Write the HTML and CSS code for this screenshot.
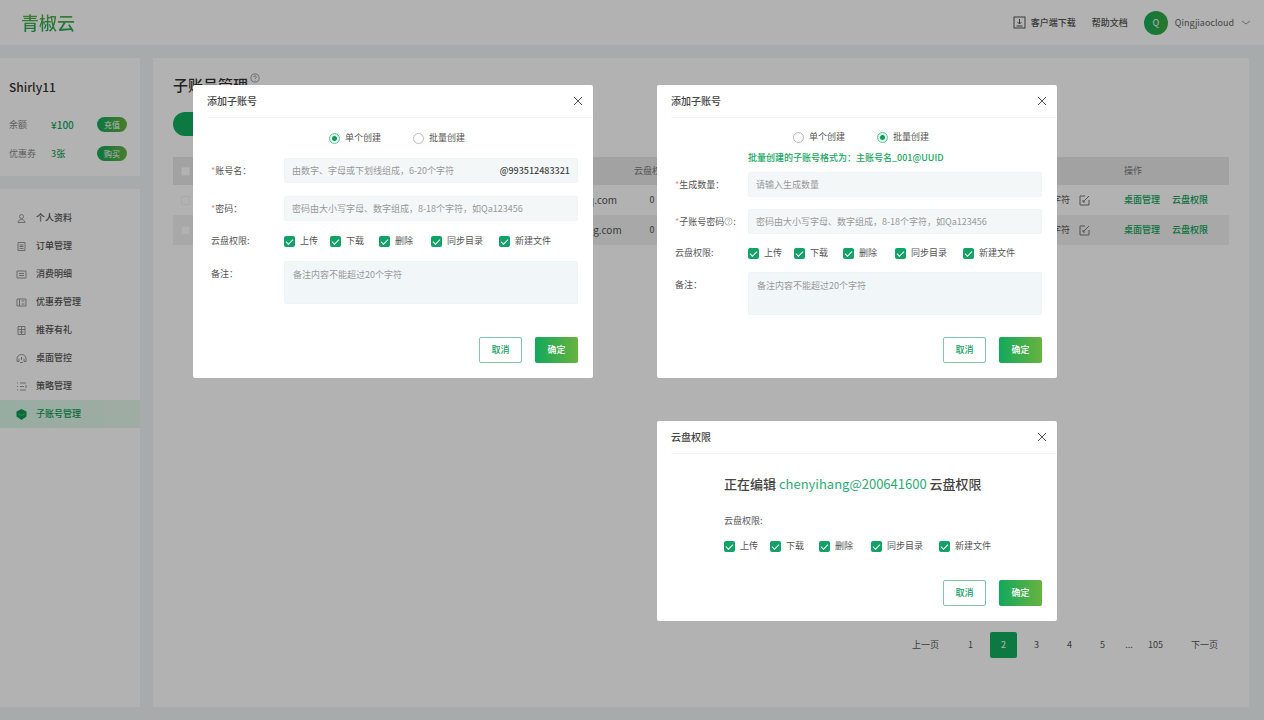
FILE: index.html
```html
<!DOCTYPE html>
<html lang="zh-CN">
<head>
<meta charset="utf-8">
<meta name="viewport" content="width=device-width, initial-scale=1">
<title>子账号管理</title>
<link rel="stylesheet" href="styles.css">
</head>
<body>
<div class="app">
  <header class="topbar">
    <div class="logo">青椒云</div>
    <nav class="topnav">
      <a class="toplink" href="#"><svg class="icon-lg" viewBox="0 0 13 13"><rect x="1" y="1" width="11" height="11"/><path d="M6.5 3v5M4.5 6l2 2 2-2M3.5 10h6"/></svg>客户端下载</a>
      <a class="toplink" href="#">帮助文档</a>
      <button class="user" type="button"><span class="avatar">Q</span>Qingjiaocloud<svg class="chevron" viewBox="0 0 10 6"><path d="M1 1l4 3 4-3"/></svg></button>
    </nav>
  </header>

  <div class="content">
    <aside class="sidebar">
      <section class="account">
        <h2 class="account-name">Shirly11</h2>
        <div class="account-row"><span>余额</span><span class="amount">¥100</span><button class="pill" type="button">充值</button></div>
        <div class="account-row"><span>优惠券</span><span class="amount amount-small">3张</span><button class="pill" type="button">购买</button></div>
      </section>
      <nav class="menu">
        <a class="menu-item" href="#"><svg class="icon" viewBox="0 0 11 11"><circle cx="5.5" cy="3.5" r="2"/><path d="M2 9.500c0-4 7-4 7 0z"/></svg>个人资料</a>
        <a class="menu-item" href="#"><svg class="icon" viewBox="0 0 11 11"><path d="M2 1.500h7v8H2zM3.500 4h4M3.500 5.500h4M3.500 7.500h4"/></svg>订单管理</a>
        <a class="menu-item" href="#"><svg class="icon" viewBox="0 0 11 11"><path d="M1 2h9v7H1zM3 4.500h5M3 6.500h5"/></svg>消费明细</a>
        <a class="menu-item" href="#"><svg class="icon" viewBox="0 0 11 11"><path d="M1 2h9v7H1zM3.500 2v7M5.500 4h3M5.500 7h3"/></svg>优惠券管理</a>
        <a class="menu-item" href="#"><svg class="icon" viewBox="0 0 11 11"><path d="M2 1.500h7v8H2zM2 4.500h7M5.500 2v7M3.500 7h4"/></svg>推荐有礼</a>
        <a class="menu-item" href="#"><svg class="icon" viewBox="0 0 11 11"><path d="M1 5.500a4.500 4 0 0 1 9 0M1 5.500v3h2v-3M10 5.500v3H8v-3M4 9.500h3M5.500 4v3"/></svg>桌面管控</a>
        <a class="menu-item" href="#"><svg class="icon" viewBox="0 0 11 11"><path d="M1 2h1M4 2h6M1 5.500h1M4 5.500h4M1 9h1M4 9h6M10 4v3"/></svg>策略管理</a>
        <a class="menu-item active" href="#"><svg class="icon" viewBox="0 0 11 11"><path class="solid" d="M5.500 0l5 2.500v5l-5 3.500-5-3.500v-5z"/><path class="cut" d="M2.500 5l3 1.500 3-1.500"/></svg>子账号管理</a>
      </nav>
    </aside>

    <main class="main">
      <h1 class="title">子账号管理<svg class="icon help" viewBox="0 0 11 11"><circle cx="5.5" cy="5.5" r="4.500"/><path d="M4 4.500c0-2 3-2 3 0 0 1-1.500 1-1.500 2M5.500 7.500v1"/></svg></h1>
      <button class="add" type="button" aria-label="添加子账号"></button>
      <table class="grid">
        <colgroup><col class="c-check"><col class="c-mail"><col class="c-num"><col class="c-note"><col class="c-ops"></colgroup>
        <thead><tr><th><input class="row-check" type="checkbox" aria-label="全选"></th><th></th><th>云盘权限</th><th></th><th>操作</th></tr></thead>
        <tbody>
          <tr><td><input class="row-check" type="checkbox" aria-label="选择"></td><td class="mail">hang@qq.com</td><td class="num">0</td><td class="note">字符<svg class="icon" viewBox="0 0 11 11"><path d="M6 1H1v9h9V5M4 7l6-6M4 5v2h2"/></svg></td><td><div class="ops"><a href="#">桌面管理</a><a href="#">云盘权限</a></div></td></tr>
          <tr><td><input class="row-check" type="checkbox" aria-label="选择"></td><td class="mail">chang@qg.com</td><td class="num">0</td><td class="note">字符<svg class="icon" viewBox="0 0 11 11"><path d="M6 1H1v9h9V5M4 7l6-6M4 5v2h2"/></svg></td><td><div class="ops"><a href="#">桌面管理</a><a href="#">云盘权限</a></div></td></tr>
        </tbody>
      </table>
      <nav class="pager">
        <button class="pg-text" type="button">上一页</button>
        <button class="pg" type="button">1</button>
        <button class="pg current" type="button">2</button>
        <button class="pg" type="button">3</button>
        <button class="pg" type="button">4</button>
        <button class="pg" type="button">5</button>
        <span class="dots">...</span>
        <button class="pg" type="button">105</button>
        <button class="pg-text" type="button">下一页</button>
      </nav>
    </main>
  </div>

  <div class="overlay">
    <form class="modal">
      <header class="modal-head"><h2>添加子账号</h2><button class="close" type="button" aria-label="关闭"><svg viewBox="0 0 10 10"><path d="M1 1l8 8M9 1l-8 8"/></svg></button></header>
      <div class="modal-body">
        <div class="radios">
          <label><input type="radio" name="mode-a" checked>单个创建</label>
          <label><input type="radio" name="mode-a">批量创建</label>
        </div>
        <div class="field"><label for="acc"><i>*</i>账号名：</label><div class="box"><input id="acc" type="text" placeholder="由数字、字母或下划线组成，6-20个字符"><span class="suffix">@993512483321</span></div></div>
        <div class="field"><label for="pwd"><i>*</i>密码：</label><div class="box"><input id="pwd" type="text" placeholder="密码由大小写字母、数字组成，8-18个字符，如Qa123456"></div></div>
        <div class="field"><span>云盘权限:</span>
          <div class="checks"><label><input type="checkbox" checked>上传</label><label><input type="checkbox" checked>下载</label><label><input type="checkbox" checked>删除</label><label><input type="checkbox" checked>同步目录</label><label><input type="checkbox" checked>新建文件</label></div>
        </div>
        <div class="field top"><label for="memo-a">备注：</label><textarea id="memo-a" placeholder="备注内容不能超过20个字符"></textarea></div>
      </div>
      <footer class="modal-foot"><button class="btn" type="button">取消</button><button class="btn primary" type="button">确定</button></footer>
    </form>

    <form class="modal">
      <header class="modal-head"><h2>添加子账号</h2><button class="close" type="button" aria-label="关闭"><svg viewBox="0 0 10 10"><path d="M1 1l8 8M9 1l-8 8"/></svg></button></header>
      <div class="modal-body compact">
        <div class="radios">
          <label><input type="radio" name="mode-b">单个创建</label>
          <label><input type="radio" name="mode-b" checked>批量创建</label>
        </div>
        <p class="hint">批量创建的子账号格式为：主账号名_001@UUID</p>
        <div class="field"><label for="qty"><i>*</i>生成数量：</label><div class="box"><input id="qty" type="text" placeholder="请输入生成数量"></div></div>
        <div class="field"><label for="pwd-b"><i>*</i>子账号密码<svg class="tip" viewBox="0 0 11 11"><circle cx="5.5" cy="5.5" r="4.500"/><path d="M4 4.500c0-2 3-2 3 0 0 1-1.500 1-1.500 2M5.500 7.500v1"/></svg>:</label><div class="box"><input id="pwd-b" type="text" placeholder="密码由大小写字母、数字组成，8-18个字符，如Qa123456"></div></div>
        <div class="field"><span>云盘权限:</span>
          <div class="checks"><label><input type="checkbox" checked>上传</label><label><input type="checkbox" checked>下载</label><label><input type="checkbox" checked>删除</label><label><input type="checkbox" checked>同步目录</label><label><input type="checkbox" checked>新建文件</label></div>
        </div>
        <div class="field top"><label for="memo-b">备注：</label><textarea id="memo-b" placeholder="备注内容不能超过20个字符"></textarea></div>
      </div>
      <footer class="modal-foot"><button class="btn" type="button">取消</button><button class="btn primary" type="button">确定</button></footer>
    </form>

    <form class="modal second">
      <header class="modal-head"><h2>云盘权限</h2><button class="close" type="button" aria-label="关闭"><svg viewBox="0 0 10 10"><path d="M1 1l8 8M9 1l-8 8"/></svg></button></header>
      <div class="edit-body">
        <p class="editing">正在编辑 <em>chenyihang@200641600</em> 云盘权限</p>
        <p class="caption">云盘权限:</p>
        <div class="checks"><label><input type="checkbox" checked>上传</label><label><input type="checkbox" checked>下载</label><label><input type="checkbox" checked>删除</label><label><input type="checkbox" checked>同步目录</label><label><input type="checkbox" checked>新建文件</label></div>
      </div>
      <footer class="modal-foot"><button class="btn" type="button">取消</button><button class="btn primary" type="button">确定</button></footer>
    </form>
  </div>
</div>
</body>
</html>
```
FILE: styles.css
```css
* { box-sizing: border-box; }
body, h1, h2, p { margin: 0; }
body, button, input, textarea {
  font-family: "Noto Sans CJK SC", "Noto Sans", sans-serif;
  font-size: 9px;
  line-height: 14px;
  color: #555;
}
h1, h2, th { font-weight: 400; }
a { color: inherit; text-decoration: none; }
i, em { font-style: normal; }
button { border: 0; padding: 0; background: none; cursor: pointer; }
svg { fill: none; stroke: currentColor; flex: none; }

.app { position: relative; min-height: 100vh; display: flex; flex-direction: column; background: #f1f5f6; }

/* top bar */
.topbar { display: flex; align-items: center; justify-content: space-between; height: 45px; padding: 0 13px 0 21px; background: #fff; }
.logo { font-size: 18px; line-height: 24px; font-weight: 500; padding-bottom: 2px; color: transparent; background: linear-gradient(#68b340, #12a85c); background-clip: text; -webkit-background-clip: text; }
.topnav { display: flex; align-items: center; gap: 16px; }
.toplink { display: flex; align-items: center; gap: 5px; font-weight: 500; }
.icon-lg { width: 13px; height: 13px; }
.user { display: flex; align-items: center; gap: 7px; color: #666; }
.avatar { width: 24px; height: 24px; border-radius: 50%; line-height: 24px; color: #fff; background: linear-gradient(90deg, #12ae5c, #3fa93d); }
.chevron { width: 10px; height: 6px; stroke: #999; }

/* page columns */
.content { flex: 1; display: flex; gap: 13px; padding: 13px 15px 13px 0; }
.sidebar { width: 140px; flex: none; display: flex; flex-direction: column; gap: 13px; }
.account { background: #fff; padding: 19px 13px 15px 9px; }
.account-name { font-size: 12px; line-height: 20px; margin-bottom: 20px; color: #333; font-weight: 500; }
.account-row { display: grid; grid-template-columns: 42px 1fr 30px; align-items: center; height: 15px; color: #888; }
.account-row + .account-row { margin-top: 14px; }
.amount { color: #12a85c; font-size: 10px; font-weight: 500; }
.amount-small { font-size: 9px; }
.pill { height: 15px; border-radius: 8px; color: #fff; font-size: 8px; line-height: 15px; background: linear-gradient(90deg, #12a85c, #68b340); }

.menu { flex: 1; background: #fff; padding-top: 15px; }
.menu-item { display: flex; align-items: center; gap: 9px; height: 28px; padding-left: 16px; font-weight: 500; }
.icon { width: 11px; height: 11px; stroke: #999; }
.active { color: #0f9a55; background: linear-gradient(90deg, #d9f8e8, #e4f6ea); }
.active .solid { fill: #0f9a55; stroke: none; }
.active .cut { stroke: #4cc98a; }

.main { flex: 1; min-width: 0; display: flex; flex-direction: column; background: #fff; padding: 15px 20px 49px; }
.title { display: flex; align-items: flex-start; gap: 2px; font-size: 15px; line-height: 24px; font-weight: 500; color: #333; }
.help { width: 10px; height: 10px; stroke: #999; }
.add { width: 74px; height: 24px; margin-top: 15px; border-radius: 12px; color: #fff; background: #12ae60; }

.grid { width: 100%; margin-top: 21px; border-collapse: collapse; table-layout: fixed; }
.grid th, .grid td { height: 30px; padding: 0; text-align: left; }
.grid th { height: 28px; background: #e8e8e8; color: #777; }
.grid tbody tr:nth-child(2) { background: #f1f1f1; }
.c-check { width: 30px; }
.c-mail { width: 431px; }
.c-num { width: 36px; }
.c-ops { width: 105px; }
.grid .mail { padding-left: 346px; font-size: 10px; }
.grid .num { text-align: center; }
.grid .note { text-align: right; padding-right: 34px; }
.note .icon { margin-left: 9px; vertical-align: middle; stroke: #777; }
.row-check { appearance: none; display: block; width: 9px; height: 9px; margin: 0 0 0 8px; background: #fff; border: 1px solid #f4f4f4; border-radius: 1px; }
.ops { display: flex; gap: 12px; color: #0fa457; font-weight: 500; }

.pager { display: flex; align-items: center; justify-content: flex-end; gap: 6px; margin-top: auto; padding-right: 11px; }
.pg { min-width: 27px; height: 26px; border-radius: 2px; }
.current { background: #12ae60; color: #fff; }
.pg-text { margin: 0 12px; }
.pg-text:last-child { margin: 0 0 0 16px; }
.dots { width: 14px; text-align: center; }

/* dialogs over the page */
.overlay { position: absolute; inset: 0; display: grid; grid-template-columns: minmax(0, 1fr) minmax(0, 1fr); align-content: start; gap: 43px 64px; padding: 85px 207px 20px 193px; background: rgba(0, 0, 0, .3); }
.modal { display: flex; flex-direction: column; background: #fff; border-radius: 2px; color: #555; }
.second { grid-column: 2; }
.modal-head { display: flex; align-items: center; justify-content: space-between; height: 33px; margin-left: 14px; padding-right: 10px; border-bottom: 1px solid #f5f5f5; }
.modal-head h2 { font-size: 10px; font-weight: 500; color: #444; }
.close { width: 10px; height: 10px; color: #555; }
.close svg { display: block; }
.modal-body { padding: 13px 15px 0 18px; }
.modal-body.compact { padding-top: 12px; }
.radios { display: flex; justify-content: center; gap: 32px; padding-left: 5px; }
.radios label, .checks label { display: flex; align-items: center; gap: 5px; white-space: nowrap; }
.field { display: grid; grid-template-columns: 73px minmax(0, 1fr); align-items: center; margin-top: 13px; }
.field i { color: #e88; }
.compact .field { margin-top: 12px; }
.field.top { align-items: start; }
.field.top label { padding-top: 6px; }
.hint { margin-top: 7px; padding-left: 73px; color: #12a85c; font-weight: 500; }
.compact .hint + .field { margin-top: 7px; }
.box { display: flex; align-items: center; height: 25px; padding: 0 7px; background: #f3f7f8; border: 1px solid #f1f4f5; border-radius: 2px; }
.box input { flex: 1; min-width: 0; padding: 0; border: 0; background: none; outline: 0; }
.suffix { color: #444; font-weight: 500; }
textarea { display: block; width: 100%; height: 43px; padding: 6px 8px; border: 1px solid #f1f4f5; border-radius: 2px; background: #f1f7f8; resize: none; outline: 0; }
::placeholder { color: #999; opacity: 1; }
.tip { width: 9px; height: 9px; vertical-align: -1px; stroke: #aaa; }

input[type="radio"] { appearance: none; width: 11px; height: 11px; margin: 0; border: 1px solid #bbb; border-radius: 50%; }
input[type="radio"]:checked { border-color: #5cc997; background: radial-gradient(circle, #129a58 0 2px, #e3f8ee 3px); }
.checks { display: grid; grid-template-columns: 46px 49px 52px 68px auto; justify-content: start; }
.checks input { appearance: none; width: 11px; height: 11px; margin: 0; border-radius: 2px; background: #12a267; display: grid; place-items: center; }
.checks input:checked::after { content: ""; width: 6px; height: 3px; border: solid #fff; border-width: 0 0 1px 1px; rotate: -45deg; }

.modal-foot { display: flex; justify-content: flex-end; gap: 13px; margin-top: auto; padding: 20px 15px 15px; }
.btn { width: 43px; height: 26px; border: 1px solid #7cc9a6; border-radius: 2px; color: #12a067; font-weight: 500; }
.primary { border: 0; color: #fff; background: linear-gradient(90deg, #12a85c, #68b340); }
.modal:first-child .modal-foot { padding-top: 33px; }

.edit-body { padding: 20px 15px 7px 67px; }
.editing { font-size: 13px; line-height: 20px; font-weight: 500; color: #444; white-space: nowrap; }
.editing em { color: #2bab74; font-weight: 400; }
.caption { margin: 20px 0 11px; }
```
